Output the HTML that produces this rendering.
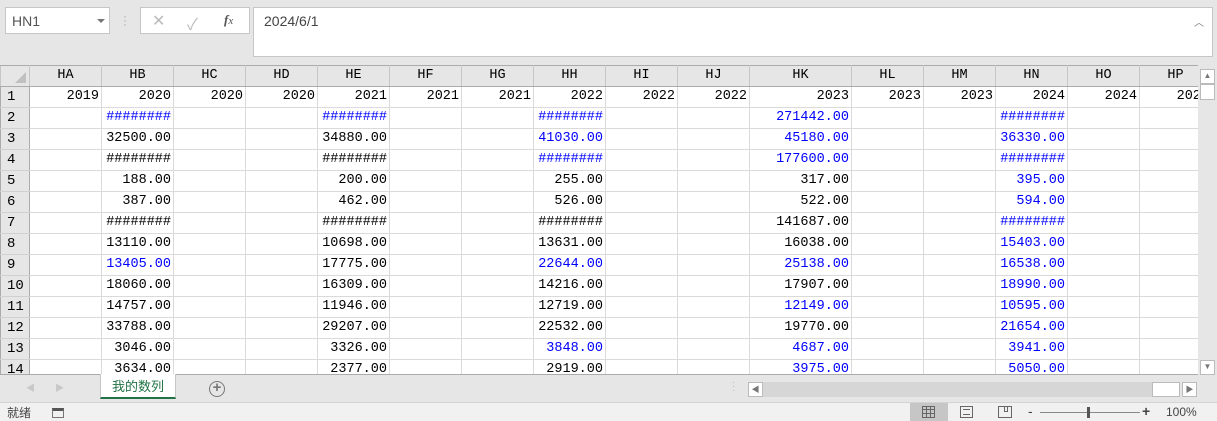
<!DOCTYPE html>
<html><head><meta charset="utf-8"><style>
*{margin:0;padding:0;box-sizing:border-box}
body{width:1217px;height:421px;overflow:hidden;background:#e6e6e6;font-family:"Liberation Sans","Noto Sans CJK SC",sans-serif;position:relative}
.a{position:absolute}
table{border-collapse:collapse;table-layout:fixed;width:1211px;font-family:"Liberation Mono","Noto Sans CJK SC",monospace;font-size:13.5px}
td{height:21px;border:1px solid #dadada;text-align:right;padding:0 2px 0 0;white-space:nowrap;overflow:hidden;background:#fff;color:#000;line-height:20px}
td.rh{background:#e6e6e6;text-align:left;padding-left:6px;border-color:#d0d0d0 #ababab;font-size:14px}
tr.h td{background:#e6e6e6;text-align:center;padding:0;height:19px;border-color:#ababab #c6c6c6;border-bottom-color:#ababab}
.b{color:#0000ff}
</style></head><body>
<div class="a" style="left:5px;top:7px;width:105px;height:27px;background:#fff;border:1px solid #c6c6c6;font-size:14px;color:#555;padding:5px 0 0 6px">HN1<span class="a" style="left:91px;top:11px;width:0;height:0;border-left:4px solid transparent;border-right:4px solid transparent;border-top:4px solid #777"></span></div>
<div class="a" style="left:123px;top:14px;color:#aaa;font-size:12px;line-height:4px">·<br>·<br>·</div>
<div class="a" style="left:140px;top:7px;width:110px;height:27px;background:#fff;border:1px solid #c6c6c6"></div>
<div class="a" style="left:152px;top:11px;color:#bbb;font-size:16px">✕</div>
<div class="a" style="left:187px;top:11px;color:#bbb;font-size:16px">✓</div>
<div class="a" style="left:224px;top:12px;color:#555;font-size:13px;font-style:italic;font-family:'Liberation Serif',serif"><b>f</b><small>x</small></div>
<div class="a" style="left:253px;top:7px;width:960px;height:50px;background:#fff;border:1px solid #c6c6c6;font-size:14px;color:#444;padding:5px 0 0 10px">2024/6/1<span class="a" style="right:8px;top:6px;color:#777;font-size:10px">︿</span></div>
<div class="a" style="left:0;top:65px;width:1198px;height:310px;overflow:hidden;background:#fff">
<table>
<colgroup><col style="width:29px"><col style="width:72px"><col style="width:72px"><col style="width:72px"><col style="width:72px"><col style="width:72px"><col style="width:72px"><col style="width:72px"><col style="width:72px"><col style="width:72px"><col style="width:72px"><col style="width:102px"><col style="width:72px"><col style="width:72px"><col style="width:72px"><col style="width:72px"><col style="width:72px"></colgroup>
<tr class="h"><td style="position:relative"><span class="a" style="right:3px;bottom:3px;width:0;height:0;border-left:11px solid transparent;border-bottom:11px solid #c0c0c0"></span></td><td>HA</td><td>HB</td><td>HC</td><td>HD</td><td>HE</td><td>HF</td><td>HG</td><td>HH</td><td>HI</td><td>HJ</td><td>HK</td><td>HL</td><td>HM</td><td>HN</td><td>HO</td><td>HP</td></tr>
<tr><td class="rh">1</td><td>2019</td><td>2020</td><td>2020</td><td>2020</td><td>2021</td><td>2021</td><td>2021</td><td>2022</td><td>2022</td><td>2022</td><td>2023</td><td>2023</td><td>2023</td><td>2024</td><td>2024</td><td>2024</td></tr>
<tr><td class="rh">2</td><td></td><td class="b">########</td><td></td><td></td><td class="b">########</td><td></td><td></td><td class="b">########</td><td></td><td></td><td class="b">271442.00</td><td></td><td></td><td class="b">########</td><td></td><td></td></tr>
<tr><td class="rh">3</td><td></td><td>32500.00</td><td></td><td></td><td>34880.00</td><td></td><td></td><td class="b">41030.00</td><td></td><td></td><td class="b">45180.00</td><td></td><td></td><td class="b">36330.00</td><td></td><td></td></tr>
<tr><td class="rh">4</td><td></td><td>########</td><td></td><td></td><td>########</td><td></td><td></td><td class="b">########</td><td></td><td></td><td class="b">177600.00</td><td></td><td></td><td class="b">########</td><td></td><td></td></tr>
<tr><td class="rh">5</td><td></td><td>188.00</td><td></td><td></td><td>200.00</td><td></td><td></td><td>255.00</td><td></td><td></td><td>317.00</td><td></td><td></td><td class="b">395.00</td><td></td><td></td></tr>
<tr><td class="rh">6</td><td></td><td>387.00</td><td></td><td></td><td>462.00</td><td></td><td></td><td>526.00</td><td></td><td></td><td>522.00</td><td></td><td></td><td class="b">594.00</td><td></td><td></td></tr>
<tr><td class="rh">7</td><td></td><td>########</td><td></td><td></td><td>########</td><td></td><td></td><td>########</td><td></td><td></td><td>141687.00</td><td></td><td></td><td class="b">########</td><td></td><td></td></tr>
<tr><td class="rh">8</td><td></td><td>13110.00</td><td></td><td></td><td>10698.00</td><td></td><td></td><td>13631.00</td><td></td><td></td><td>16038.00</td><td></td><td></td><td class="b">15403.00</td><td></td><td></td></tr>
<tr><td class="rh">9</td><td></td><td class="b">13405.00</td><td></td><td></td><td>17775.00</td><td></td><td></td><td class="b">22644.00</td><td></td><td></td><td class="b">25138.00</td><td></td><td></td><td class="b">16538.00</td><td></td><td></td></tr>
<tr><td class="rh">10</td><td></td><td>18060.00</td><td></td><td></td><td>16309.00</td><td></td><td></td><td>14216.00</td><td></td><td></td><td>17907.00</td><td></td><td></td><td class="b">18990.00</td><td></td><td></td></tr>
<tr><td class="rh">11</td><td></td><td>14757.00</td><td></td><td></td><td>11946.00</td><td></td><td></td><td>12719.00</td><td></td><td></td><td class="b">12149.00</td><td></td><td></td><td class="b">10595.00</td><td></td><td></td></tr>
<tr><td class="rh">12</td><td></td><td>33788.00</td><td></td><td></td><td>29207.00</td><td></td><td></td><td>22532.00</td><td></td><td></td><td>19770.00</td><td></td><td></td><td class="b">21654.00</td><td></td><td></td></tr>
<tr><td class="rh">13</td><td></td><td>3046.00</td><td></td><td></td><td>3326.00</td><td></td><td></td><td class="b">3848.00</td><td></td><td></td><td class="b">4687.00</td><td></td><td></td><td class="b">3941.00</td><td></td><td></td></tr>
<tr><td class="rh">14</td><td></td><td>3634.00</td><td></td><td></td><td>2377.00</td><td></td><td></td><td>2919.00</td><td></td><td></td><td class="b">3975.00</td><td></td><td></td><td class="b">5050.00</td><td></td><td></td></tr>
</table></div>
<div class="a" style="left:0;top:374px;width:1198px;height:1px;background:#ababab"></div>
<div class="a" style="left:1198px;top:65px;width:19px;height:310px;background:#e6e6e6"></div>
<div class="a" style="left:1200px;top:69px;width:15px;height:15px;background:#fff;border:1px solid #bbb;color:#777;font-size:8px;text-align:center;line-height:12px">▲</div>
<div class="a" style="left:1200px;top:84px;width:15px;height:16px;background:#fff;border:1px solid #bbb"></div>
<div class="a" style="left:1200px;top:360px;width:15px;height:15px;background:#fff;border:1px solid #bbb;color:#777;font-size:8px;text-align:center;line-height:12px">▼</div>
<div class="a" style="left:26px;top:381px;color:#c8c8c8;font-size:9px">◀</div>
<div class="a" style="left:55px;top:381px;color:#c8c8c8;font-size:9px">▶</div>
<div class="a" style="left:100px;top:374px;width:76px;height:25px;background:#fff;border-bottom:2px solid #217346;border-left:1px solid #c6c6c6;border-right:1px solid #c6c6c6;color:#217346;font-size:13px;text-align:center;line-height:24px;font-family:'Noto Sans CJK SC',sans-serif">我的数列</div>
<div class="a" style="left:209px;top:381px;width:16px;height:16px;border:1.5px solid #777;border-radius:50%;color:#777;font-size:15px;line-height:12px;text-align:center;font-weight:bold">+</div>
<div class="a" style="left:732px;top:381px;color:#bbb;font-size:10px;line-height:4px">·<br>·<br>·</div>
<div class="a" style="left:748px;top:382px;width:432px;height:15px;background:#d6d6d6"></div>
<div class="a" style="left:748px;top:382px;width:15px;height:15px;background:#fff;border:1px solid #bbb;color:#777;font-size:8px;text-align:center;line-height:13px">◀</div>
<div class="a" style="left:1152px;top:382px;width:28px;height:15px;background:#fff;border:1px solid #bbb"></div>
<div class="a" style="left:1182px;top:382px;width:15px;height:15px;background:#fff;border:1px solid #bbb;color:#777;font-size:8px;text-align:center;line-height:13px">▶</div>
<div class="a" style="left:0;top:402px;width:1217px;height:19px;background:#f1f1f1;border-top:1px solid #d4d4d4"></div>
<div class="a" style="left:7px;top:404px;font-size:12px;color:#444;font-family:'Noto Sans CJK SC',sans-serif">就绪</div>
<div class="a" style="left:52px;top:408px;width:12px;height:10px;border:1px solid #777;border-top:3px solid #555"></div>
<div class="a" style="left:910px;top:403px;width:38px;height:18px;background:#c6c6c6"></div>
<div class="a" style="left:922px;top:406px;width:13px;height:12px;border:1px solid #666;background:repeating-linear-gradient(90deg,transparent 0 3px,#666 3px 4px),repeating-linear-gradient(0deg,transparent 0 3px,#666 3px 4px)"></div>
<div class="a" style="left:960px;top:406px;width:13px;height:12px;border:1px solid #666"><div style="margin:2px;height:6px;border-top:1px solid #666;border-bottom:1px solid #666"></div></div>
<div class="a" style="left:998px;top:406px;width:14px;height:12px;border:1px solid #666"><div style="margin-left:5px;width:4px;height:5px;border:1px solid #666;border-top:0"></div></div>
<div class="a" style="left:1028px;top:403px;font-size:14px;color:#444">-</div>
<div class="a" style="left:1040px;top:412px;width:100px;height:1px;background:#888"></div>
<div class="a" style="left:1087px;top:407px;width:3px;height:11px;background:#555"></div>
<div class="a" style="left:1142px;top:403px;font-size:14px;color:#444;font-weight:bold">+</div>
<div class="a" style="left:1166px;top:405px;font-size:12px;color:#444">100%</div>
</body></html>
